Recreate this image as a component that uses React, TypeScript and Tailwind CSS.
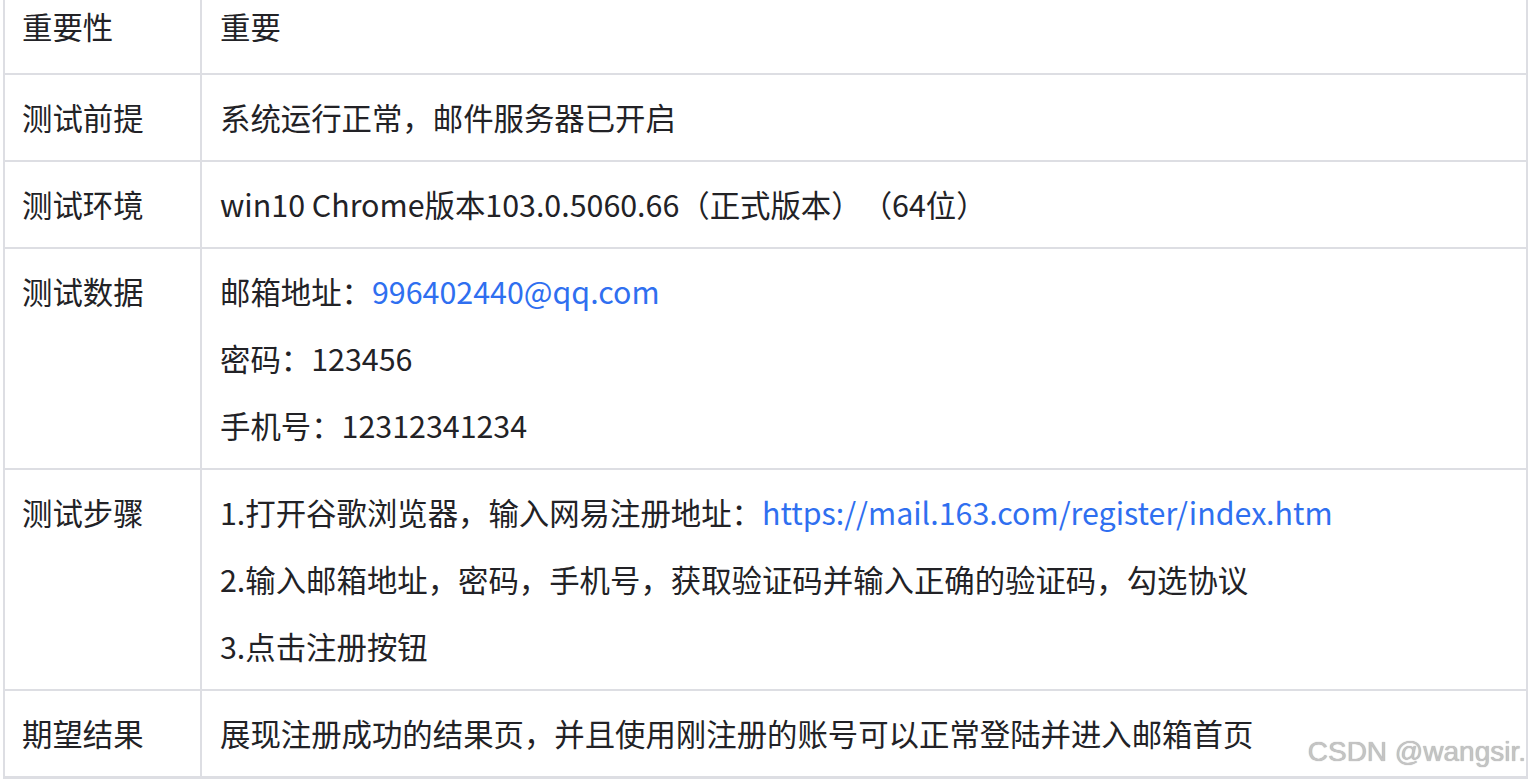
import React from 'react';

type Part = { text: string; link?: boolean };
type Row = { label: string; lines: Part[][] };

const ROWS: Row[] = [
  { label: '重要性', lines: [[{ text: '重要' }]] },
  { label: '测试前提', lines: [[{ text: '系统运行正常，邮件服务器已开启' }]] },
  { label: '测试环境', lines: [[{ text: 'win10 Chrome版本103.0.5060.66（正式版本）（64位）' }]] },
  {
    label: '测试数据',
    lines: [
      [{ text: '邮箱地址：' }, { text: '996402440@qq.com', link: true }],
      [{ text: '密码：123456' }],
      [{ text: '手机号：12312341234' }],
    ],
  },
  {
    label: '测试步骤',
    lines: [
      [{ text: '1.打开谷歌浏览器，输入网易注册地址：' }, { text: 'https://mail.163.com/register/index.htm', link: true }],
      [{ text: '2.输入邮箱地址，密码，手机号，获取验证码并输入正确的验证码，勾选协议' }],
      [{ text: '3.点击注册按钮' }],
    ],
  },
  { label: '期望结果', lines: [[{ text: '展现注册成功的结果页，并且使用刚注册的账号可以正常登陆并进入邮箱首页' }]] },
];

export default function App() {
  return (
    <div
      className="relative w-[1530px] h-[782px] overflow-hidden bg-white text-[#222226] text-[30.4px] [text-spacing-trim:space-all]"
      style={{ fontFamily: '"Noto Sans CJK SC", "Noto Sans", sans-serif' }}
    >
      <div className="ml-[3px] -mt-[18px] w-[1525px] border-l-2 border-r-2 border-b-[3px] border-[#dddee3]">
        {ROWS.map((r, idx) => {
          const pad = idx === 0 ? 'pt-4 pb-[21px]' : 'pt-4 pb-[17px]';
          return (
            <div key={r.label} className="flex border-t-2 border-[#dddee3]">
              <div className={`w-[197px] shrink-0 border-r-2 border-[#dddee3] pl-[17px] leading-[52px] ${pad}`}>
                {r.label}
              </div>
              <div className={`flex-1 flex flex-col gap-[15px] pl-[18px] leading-[52px] ${pad}`}>
                {r.lines.map((line, i) => (
                  <div key={i} className="whitespace-nowrap">
                    {line.map((p, j) =>
                      p.link ? (
                        <span key={j} className="text-[#2f6ff0]">
                          {p.text}
                        </span>
                      ) : (
                        <span key={j}>{p.text}</span>
                      )
                    )}
                  </div>
                ))}
              </div>
            </div>
          );
        })}
      </div>
      <div
        className="absolute right-[4px] bottom-[16px] text-[28px] leading-none text-[#c4c4c4]"
        style={{ fontFamily: '"Liberation Sans", Arial, sans-serif', textShadow: '0 0 1px #9a9a9a' }}
      >
        CSDN @wangsir.
      </div>
    </div>
  );
}
